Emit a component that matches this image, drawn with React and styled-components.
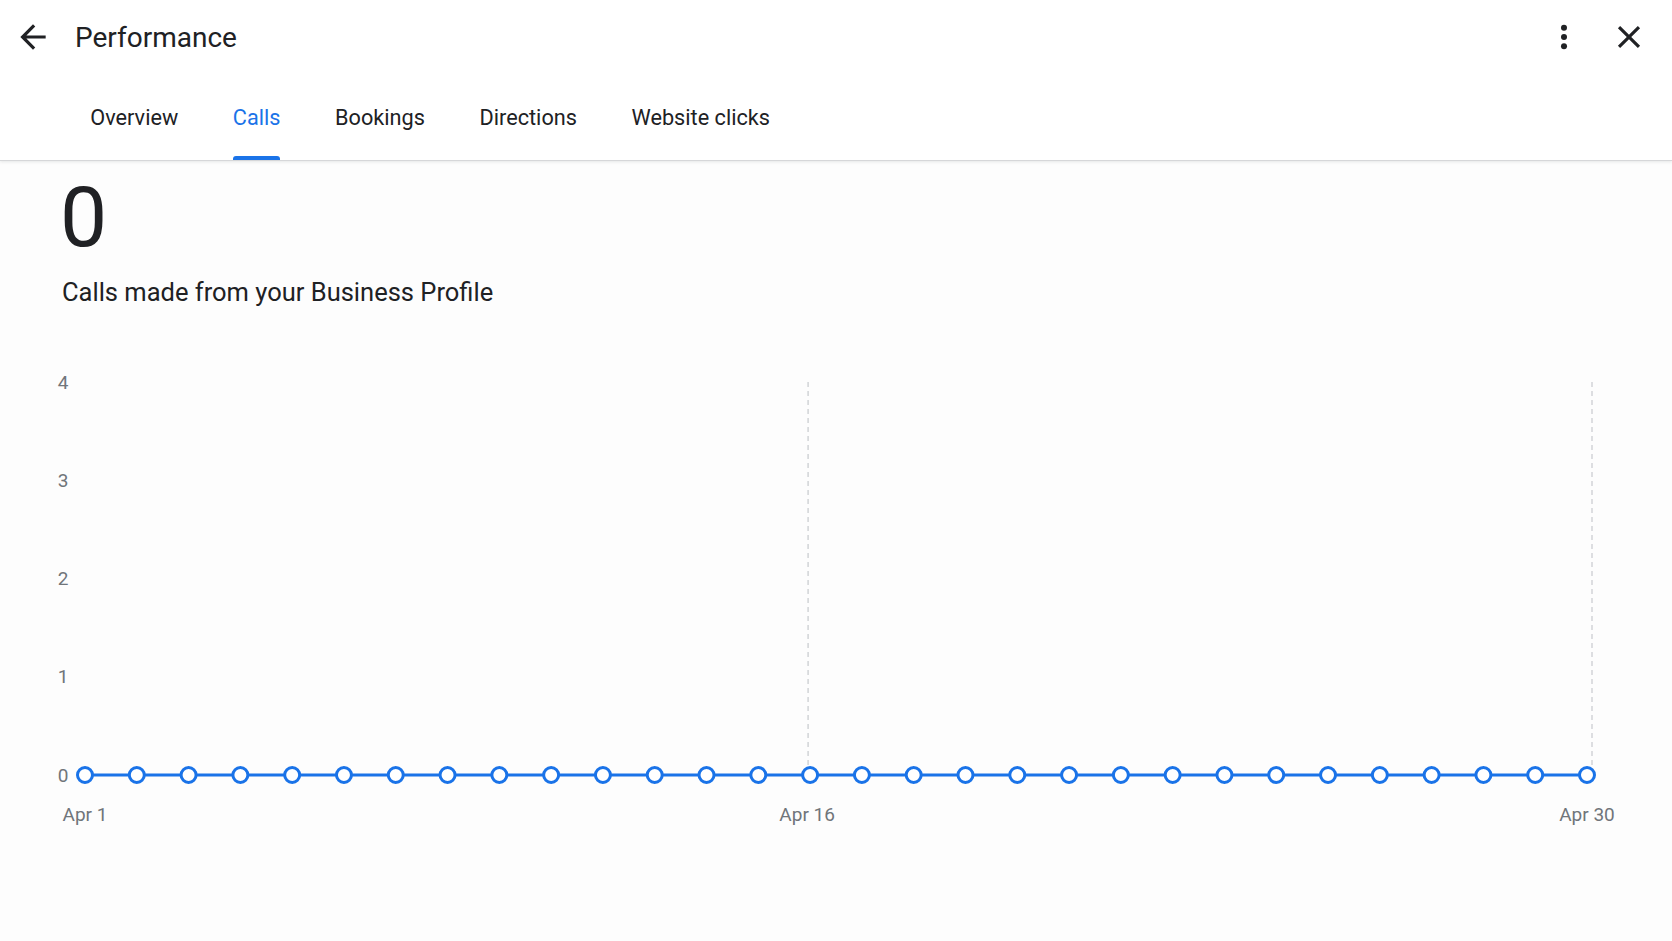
import React, { useState } from "react";
import styled, { createGlobalStyle } from "styled-components";

const GlobalStyle = createGlobalStyle`
  body {
    margin: 0;
    background: #fdfdfd;
    font-family: Roboto, "Liberation Sans", sans-serif;
    color: #202124;
  }
`;

const Page = styled.div`
  width: 1672px;
  height: 941px;
  overflow: hidden;
  display: flex;
  flex-direction: column;
`;

const Header = styled.header`
  background: #ffffff;
  box-shadow: 0 1px 0 #d6d7d9, 0 2px 3px rgba(60, 64, 67, 0.12);
  position: relative;
  z-index: 1;
`;

const TopBar = styled.div`
  height: 74px;
  display: flex;
  align-items: center;
  padding: 0 24px 0 14px;
`;

const IconButton = styled.button`
  width: 38px;
  height: 38px;
  padding: 0;
  border: none;
  background: none;
  display: flex;
  align-items: center;
  justify-content: center;
  color: #202124;
  cursor: pointer;
`;

const Title = styled.h1`
  margin: 0 0 0 23px;
  font-size: 28px;
  font-weight: 400;
  flex: 1;
`;

const Actions = styled.div`
  display: flex;
  align-items: center;
  gap: 27px;
`;

const Tabs = styled.nav`
  height: 86px;
  display: flex;
  padding-left: 63px;
`;

const Tab = styled.button`
  position: relative;
  height: 100%;
  padding: 0 27.3px;
  border: none;
  background: none;
  font-family: inherit;
  font-size: 21.7px;
  color: ${(p) => (p.$active ? "#1a73e8" : "#202124")};
  cursor: pointer;

  &::after {
    content: "";
    display: ${(p) => (p.$active ? "block" : "none")};
    position: absolute;
    left: 27.3px;
    right: 27.3px;
    bottom: 0;
    height: 4px;
    border-radius: 3px 3px 0 0;
    background: #1a73e8;
  }
`;

const Body = styled.main`
  padding: 16px 0 0 60px;
  display: flex;
  flex-direction: column;
`;

const BigNumber = styled.div`
  font-size: 84px;
  line-height: 1;
  font-weight: 400;
  color: #202124;
`;

const Caption = styled.p`
  margin: 17px 0 0 2px;
  font-size: 25.5px;
  line-height: 30px;
  color: #202124;
`;

const Chart = styled.svg`
  display: block;
  margin-top: 33px;
  font-family: Roboto, "Liberation Sans", sans-serif;
`;

const TABS = ["Overview", "Calls", "Bookings", "Directions", "Website clicks"];

const BackIcon = () => (
  <svg width="38" height="38" viewBox="0 0 24 24" fill="currentColor">
    <path d="M20 11H7.83l5.59-5.59L12 4l-8 8 8 8 1.41-1.41L7.83 13H20v-2z" />
  </svg>
);

const MoreIcon = () => (
  <svg width="38" height="38" viewBox="0 0 24 24" fill="currentColor">
    <circle cx="12" cy="6.2" r="1.9" />
    <circle cx="12" cy="12" r="1.9" />
    <circle cx="12" cy="17.8" r="1.9" />
  </svg>
);

const CloseIcon = () => (
  <svg width="38" height="38" viewBox="0 0 24 24" fill="currentColor">
    <path d="M19 6.41L17.59 5 12 10.59 6.41 5 5 6.41 10.59 12 5 17.59 6.41 19 12 13.41 17.59 19 19 17.59 13.41 12z" />
  </svg>
);

const CallsChart = () => {
  const top = 42;
  const base = 435;
  const x0 = 85;
  const x1 = 1587;
  const days = 30;
  const step = (x1 - x0) / (days - 1);
  const xs = Array.from({ length: days }, (_, i) => x0 + i * step);
  const ticks = [4, 3, 2, 1, 0];
  const grid = [xs[14] - 2, x1 + 5];
  const labels = [
    { i: 0, text: "Apr 1" },
    { i: 14, text: "Apr 16" },
    { i: 29, text: "Apr 30" },
  ];

  return (
    <Chart width="1672" height="500" viewBox="0 0 1672 500">
      {ticks.map((t) => (
        <text
          key={t}
          x="63"
          y={base - ((base - top) * t) / 4}
          fontSize="19"
          fill="#70757a"
          textAnchor="middle"
          dominantBaseline="central"
        >
          {t}
        </text>
      ))}
      {grid.map((x) => (
        <line
          key={x}
          x1={x}
          x2={x}
          y1={top}
          y2={base}
          stroke="#d2d4d7"
          strokeWidth="1.5"
          strokeDasharray="5 4"
        />
      ))}
      <line x1={x0} x2={x1} y1={base} y2={base} stroke="#1a73e8" strokeWidth="3" />
      {xs.map((x, i) => (
        <circle key={i} cx={x} cy={base} r="7.5" fill="#ffffff" stroke="#1a73e8" strokeWidth="3" />
      ))}
      {labels.map((l) => (
        <text
          key={l.text}
          x={xs[l.i] - (l.i === 14 ? 3 : 0)}
          y="474"
          fontSize="19"
          fill="#70757a"
          textAnchor="middle"
          dominantBaseline="central"
        >
          {l.text}
        </text>
      ))}
    </Chart>
  );
};

export default function App() {
  const [active, setActive] = useState("Calls");

  return (
    <Page>
      <GlobalStyle />
      <Header>
        <TopBar>
          <IconButton aria-label="Back">
            <BackIcon />
          </IconButton>
          <Title>Performance</Title>
          <Actions>
            <IconButton aria-label="More options">
              <MoreIcon />
            </IconButton>
            <IconButton aria-label="Close">
              <CloseIcon />
            </IconButton>
          </Actions>
        </TopBar>
        <Tabs>
          {TABS.map((t) => (
            <Tab key={t} $active={t === active} onClick={() => setActive(t)}>
              {t}
            </Tab>
          ))}
        </Tabs>
      </Header>
      <Body>
        <BigNumber>0</BigNumber>
        <Caption>Calls made from your Business Profile</Caption>
      </Body>
      <CallsChart />
    </Page>
  );
}
